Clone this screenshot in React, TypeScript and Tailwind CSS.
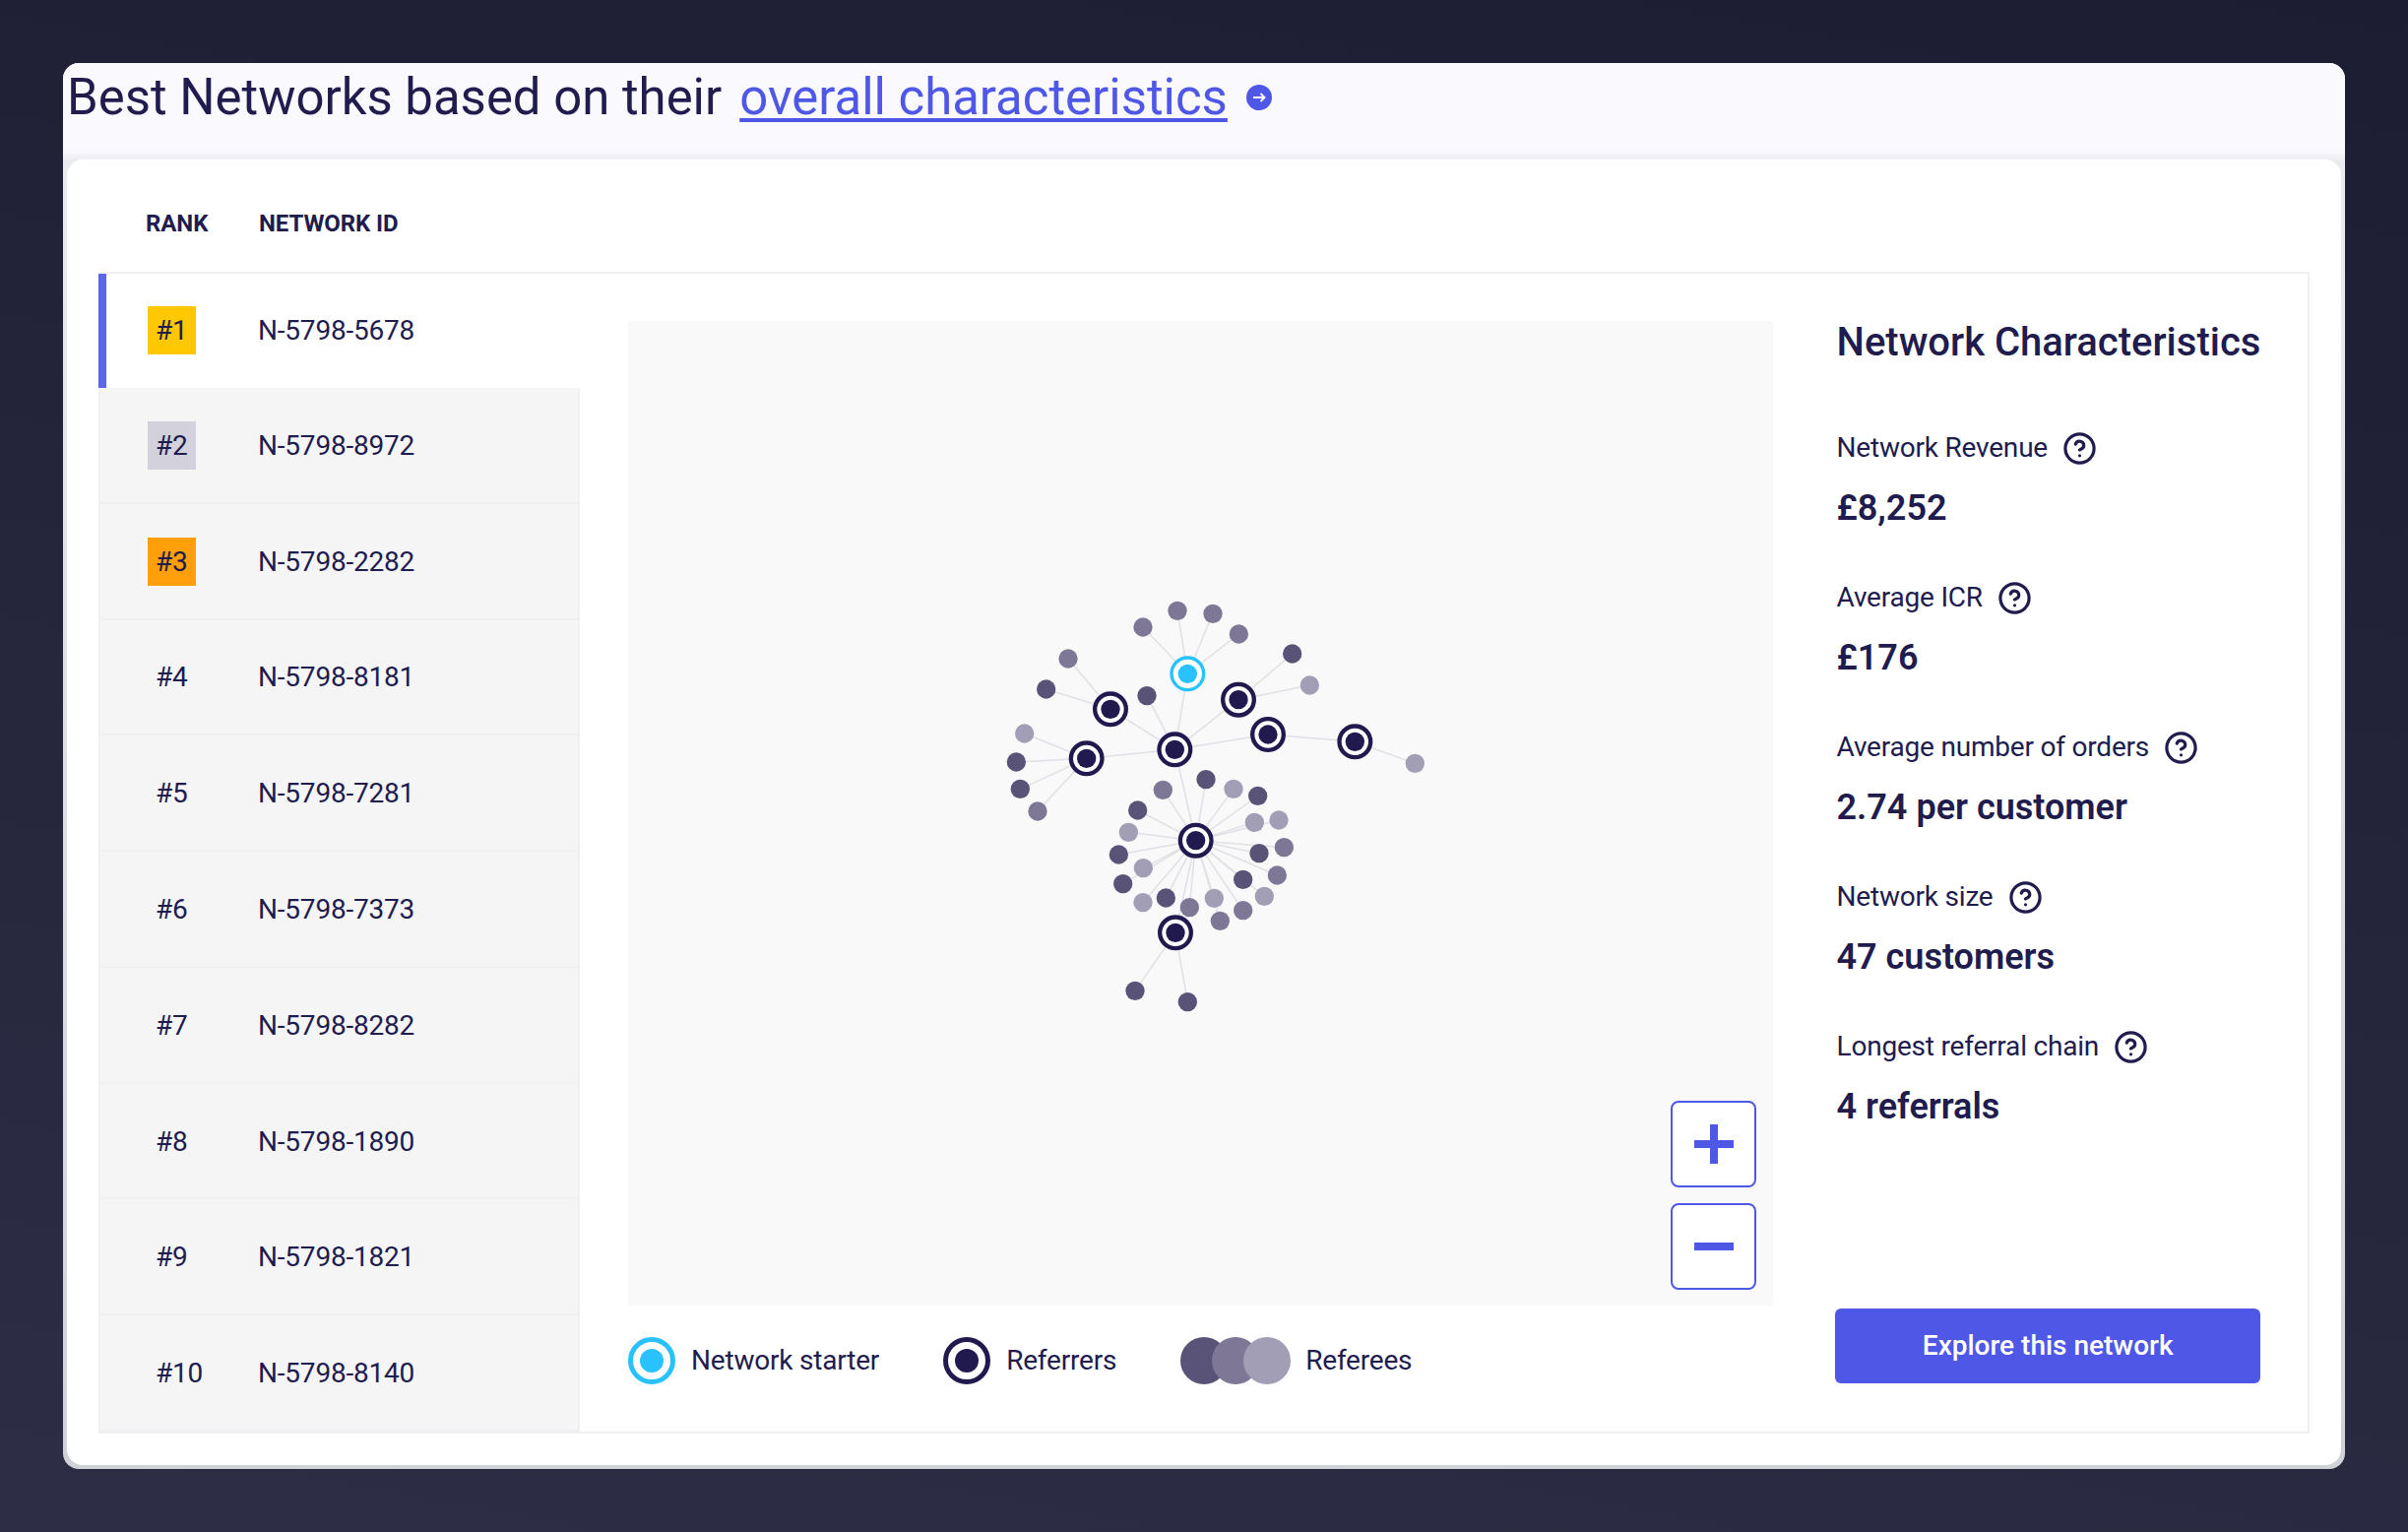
import { CircleHelp } from "lucide-react";

const font = { fontFamily: "Roboto, sans-serif" };

const rows = [
  { rank: "#1", id: "N-5798-5678", badge: "bg-[#ffc800]" },
  { rank: "#2", id: "N-5798-8972", badge: "bg-[#d2d1dc]" },
  { rank: "#3", id: "N-5798-2282", badge: "bg-[#ff9f0a]" },
  { rank: "#4", id: "N-5798-8181", badge: "" },
  { rank: "#5", id: "N-5798-7281", badge: "" },
  { rank: "#6", id: "N-5798-7373", badge: "" },
  { rank: "#7", id: "N-5798-8282", badge: "" },
  { rank: "#8", id: "N-5798-1890", badge: "" },
  { rank: "#9", id: "N-5798-1821", badge: "" },
  { rank: "#10", id: "N-5798-8140", badge: "" },
];

const stats = [
  { label: "Network Revenue", value: "£8,252" },
  { label: "Average ICR", value: "£176" },
  { label: "Average number of orders", value: "2.74 per customer" },
  { label: "Network size", value: "47 customers" },
  { label: "Longest referral chain", value: "4 referrals" },
];

const DARK = "#5a5378";
const MID = "#7e7896";
const LIGHT = "#a19eb5";

type Hub = [number, number];
const starter: Hub = [679, 313];
const hubs: Hub[] = [
  [444, 421],
  [834, 392],
  [924, 498],
  [1189, 520],
  [371, 571],
  [640, 544],
  [704, 821],
  [642, 1102],
];

const hubEdges: [Hub, Hub][] = [
  [starter, hubs[5]],
  [hubs[0], hubs[5]],
  [hubs[1], hubs[5]],
  [hubs[2], hubs[5]],
  [hubs[2], hubs[3]],
  [hubs[4], hubs[5]],
  [hubs[5], hubs[6]],
  [hubs[6], hubs[7]],
];

// x, y, colour, parent
const leaves: [number, number, string, Hub][] = [
  [543, 171, MID, starter],
  [648, 121, MID, starter],
  [756, 130, MID, starter],
  [835, 192, MID, starter],
  [998, 252, DARK, hubs[1]],
  [1051, 348, LIGHT, hubs[1]],
  [315, 267, MID, hubs[0]],
  [248, 360, DARK, hubs[0]],
  [555, 380, DARK, hubs[5]],
  [182, 495, LIGHT, hubs[4]],
  [157, 582, DARK, hubs[4]],
  [169, 664, DARK, hubs[4]],
  [222, 732, MID, hubs[4]],
  [1372, 586, LIGHT, hubs[3]],
  [519, 1279, DARK, hubs[7]],
  [679, 1313, DARK, hubs[7]],
  [604, 667, MID, hubs[6]],
  [735, 635, DARK, hubs[6]],
  [819, 664, LIGHT, hubs[6]],
  [893, 685, DARK, hubs[6]],
  [883, 766, LIGHT, hubs[6]],
  [957, 759, LIGHT, hubs[6]],
  [897, 860, DARK, hubs[6]],
  [973, 842, MID, hubs[6]],
  [952, 927, MID, hubs[6]],
  [848, 940, DARK, hubs[6]],
  [913, 991, LIGHT, hubs[6]],
  [848, 1034, MID, hubs[6]],
  [778, 1066, MID, hubs[6]],
  [760, 997, LIGHT, hubs[6]],
  [685, 1025, MID, hubs[6]],
  [613, 996, DARK, hubs[6]],
  [543, 1010, LIGHT, hubs[6]],
  [482, 953, DARK, hubs[6]],
  [544, 905, LIGHT, hubs[6]],
  [469, 864, DARK, hubs[6]],
  [499, 796, LIGHT, hubs[6]],
  [527, 729, DARK, hubs[6]],
];

function NetworkGraph() {
  return (
    <svg viewBox="0 0 1500 1410" className="absolute left-[342px] top-[254px] w-[500px] h-[470px]">
      {hubEdges.map(([a, b], i) => (
        <line key={i} x1={a[0]} y1={a[1]} x2={b[0]} y2={b[1]} stroke="#e0e0e7" strokeWidth="4.5" />
      ))}
      {leaves.map(([x, y, , p], i) => (
        <line key={i} x1={x} y1={y} x2={p[0]} y2={p[1]} stroke="#e0e0e7" strokeWidth="4.5" />
      ))}
      {leaves.map(([x, y, c], i) => (
        <circle key={i} cx={x} cy={y} r="29" fill={c} />
      ))}
      {hubs.map(([x, y], i) => (
        <g key={i}>
          <circle cx={x} cy={y} r="47.5" fill="#fff" stroke="#211a4f" strokeWidth="13" />
          <circle cx={x} cy={y} r="29" fill="#211a4f" />
        </g>
      ))}
      <circle cx={starter[0]} cy={starter[1]} r="49" fill="#fff" stroke="#29c2ff" strokeWidth="10" />
      <circle cx={starter[0]} cy={starter[1]} r="29" fill="#29c2ff" />
    </svg>
  );
}

export default function App() {
  return (
    <div
      style={font}
      className="w-[2446px] h-[1556px] p-[64px] bg-[linear-gradient(190deg,#1c1d32,#2d2e45)] text-[#211c4e] overflow-hidden"
    >
      <div className="h-full flex flex-col rounded-[16px] overflow-hidden bg-gradient-to-b from-[#ecedf1] to-[#d0d2d8] pb-[4px]">
        {/* Title */}
        <div className="h-[98px] shrink-0 bg-[#f9f9fe] pl-[4px] pb-[28px] flex items-center gap-[18px] text-[50.9px] leading-[62px] shadow-[inset_0_-12px_10px_-10px_rgba(30,30,60,0.08)]">
          <span>Best Networks based on their</span>
          <span className="text-[#4f57e6] underline decoration-[4px] underline-offset-[4px]">overall characteristics</span>
          <svg viewBox="0 0 26 26" className="w-[26px] h-[26px] ml-[1px]">
            <circle cx="13" cy="13" r="13" fill="#4f57e6" />
            <path d="M7 13h11.5M14.5 9l4 4-4 4" fill="none" stroke="#fff" strokeWidth="1.9" />
          </svg>
        </div>

        {/* Inner card */}
        <div className="flex-1 flex flex-col mx-[4px] bg-white rounded-[16px] px-[32px] pb-[32px]">
          <div className="h-[114px] shrink-0 pt-[16px] flex items-center text-[24px] font-bold tracking-[-0.1px]">
            <span className="ml-[48px] w-[115px]">RANK</span>
            <span>NETWORK ID</span>
          </div>

          <div className="flex-1 flex border-2 border-[#f0f0f2]">
            {/* Ranking list */}
            <div className="w-[487px] shrink-0 flex flex-col text-[28px] tracking-[-0.2px]">
              {rows.map((row, i) => (
                <div
                  key={row.id}
                  className={
                    i === 0
                      ? "h-[116px] shrink-0 flex items-center -ml-[2px] border-l-[8px] border-[#5b66ea] bg-white pl-[42px] pb-[1px]"
                      : "flex-1 flex items-center bg-[#f5f5f6] border-b-2 border-r-2 border-[#f0f0f2] pl-[48px] pt-[2px]"
                  }
                >
                  <span className={`w-[49px] h-[49px] flex items-center pl-[8px] ${row.badge}`}>{row.rank}</span>
                  <span className="ml-[63px]">{row.id}</span>
                </div>
              ))}
            </div>

            {/* Graph and legend */}
            <div className="flex-1 flex pl-[49px] pr-[48px] py-[48px] gap-[63px]">
              <div className="w-[1163px] shrink-0 flex flex-col">
                <div className="relative h-[1000px] bg-[#f9f9f9]">
                  <NetworkGraph />
                  <div className="absolute left-[1059px] top-[792px] flex flex-col gap-[16px]">
                    <button className="w-[87px] h-[88px] bg-white border-2 border-[#4f57e6] rounded-[8px] flex items-center justify-center">
                      <svg viewBox="0 0 40 40" className="w-[40px] h-[40px]">
                        <path d="M20 0v40M0 20h40" stroke="#4f57e6" strokeWidth="8" />
                      </svg>
                    </button>
                    <button className="w-[87px] h-[88px] bg-white border-2 border-[#4f57e6] rounded-[8px] flex items-center justify-center">
                      <svg viewBox="0 0 40 8" className="w-[40px] h-[8px]">
                        <rect width="40" height="8" fill="#4f57e6" />
                      </svg>
                    </button>
                  </div>
                </div>

                <div className="mt-[32px] flex items-center text-[28px] tracking-[-0.2px]">
                  <span className="w-[48px] h-[48px] rounded-full border-[5px] border-[#29c2ff] bg-white flex items-center justify-center">
                    <span className="w-[24px] h-[24px] rounded-full bg-[#29c2ff]" />
                  </span>
                  <span className="ml-[16px]">Network starter</span>
                  <span className="ml-[65px] w-[48px] h-[48px] rounded-full border-[5px] border-[#211a4f] bg-white flex items-center justify-center">
                    <span className="w-[24px] h-[24px] rounded-full bg-[#211a4f]" />
                  </span>
                  <span className="ml-[16px]">Referrers</span>
                  <span className="ml-[65px] flex">
                    <span className="w-[48px] h-[48px] rounded-full bg-[#5a5378]" />
                    <span className="w-[48px] h-[48px] rounded-full bg-[#7e7896] -ml-[16px]" />
                    <span className="w-[48px] h-[48px] rounded-full bg-[#a19eb5] -ml-[16px]" />
                  </span>
                  <span className="ml-[15px]">Referees</span>
                </div>
              </div>

              {/* Characteristics */}
              <div className="flex-1 flex flex-col">
                <div className="pl-[1.5px]">
                  <h2 className="text-[40px] leading-[44px] font-medium whitespace-nowrap">Network Characteristics</h2>
                  <div className="mt-[69px] flex flex-col gap-[55px]">
                    {stats.map((s) => (
                      <div key={s.label}>
                        <div className="h-[32px] flex items-center gap-[15px] text-[28px] tracking-[-0.2px]">
                          {s.label}
                          <CircleHelp className="w-[35px] h-[35px]" strokeWidth={2.2} />
                        </div>
                        <div className="mt-[25px] text-[36px] leading-[40px] font-semibold">{s.value}</div>
                      </div>
                    ))}
                  </div>
                </div>
                <button className="mt-auto mb-[1px] h-[76px] bg-[#4f57e6] text-white text-[28px] font-medium rounded-[6px]">
                  Explore this network
                </button>
              </div>
            </div>
          </div>
        </div>
      </div>
    </div>
  );
}
